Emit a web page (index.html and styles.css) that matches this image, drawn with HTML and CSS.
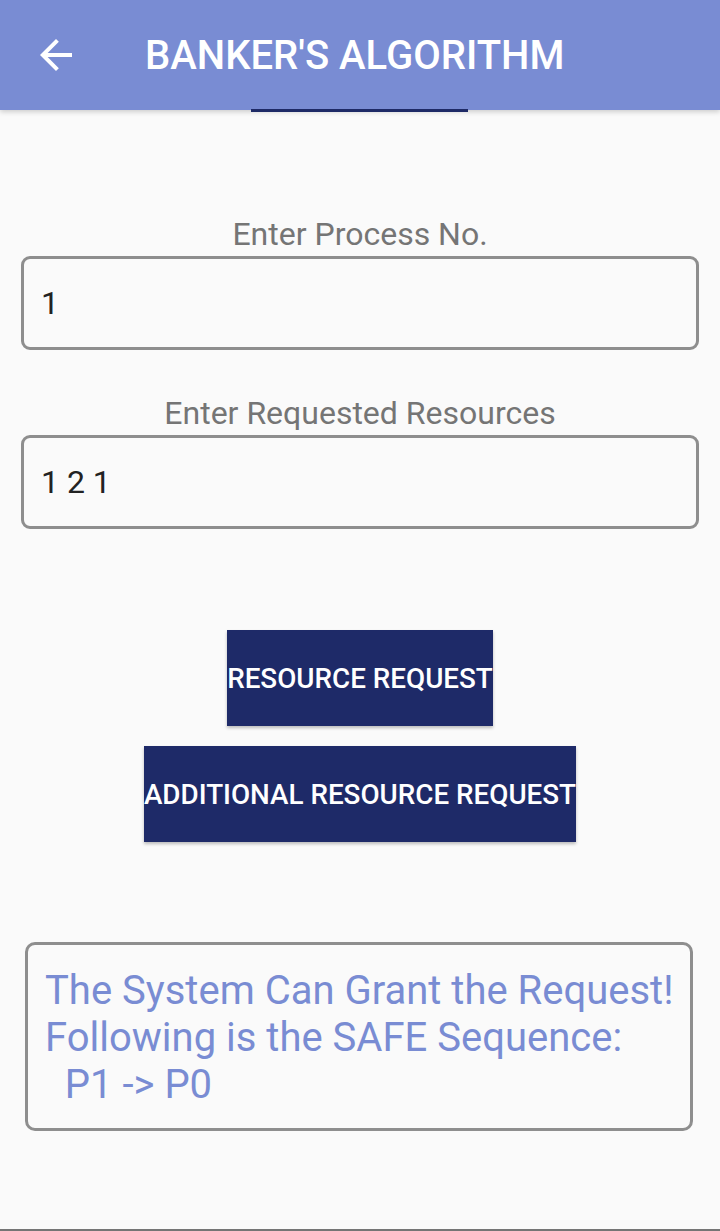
FILE: index.html
```html
<!DOCTYPE html>
<html>
<head>
<meta charset="utf-8">
<link rel="stylesheet" href="styles.css">
</head>
<body>
<div class="screen">
  <header class="appbar">
    <svg class="back" viewBox="0 0 24 24" width="48" height="48"><path d="M20 11H7.83l5.59-5.59L12 4l-8 8 8 8 1.41-1.41L7.83 13H20v-2z" fill="#fff"/></svg>
    <h1 class="title">BANKER'S ALGORITHM</h1>
    <div class="tab-indicator"></div>
  </header>
  <main class="content">
    <label class="field-label">Enter Process No.</label>
    <div class="field">1</div>
    <label class="field-label second">Enter Requested Resources</label>
    <div class="field">1 2 1</div>
    <div class="buttons">
      <button class="btn">RESOURCE REQUEST</button>
      <button class="btn">ADDITIONAL RESOURCE REQUEST</button>
    </div>
    <div class="result">The System Can Grant the Request!
Following is the SAFE Sequence:
  P1 -&gt; P0</div>
  </main>
  <div class="bottom-line"></div>
</div>
</body>
</html>
```
FILE: styles.css
```css
html, body {
  margin: 0;
  padding: 0;
  background: #fafafa;
  font-family: Roboto, "Liberation Sans", sans-serif;
}
.screen {
  width: 720px;
  height: 1231px;
  display: flex;
  flex-direction: column;
  position: relative;
  overflow: hidden;
}
.appbar {
  height: 110px;
  flex: none;
  background: #798cd3;
  display: flex;
  align-items: center;
  position: relative;
  box-shadow: 0 2px 5px rgba(0,0,0,0.18);
  z-index: 1;
}
.back {
  margin-left: 32px;
  width: 48px;
  height: 48px;
}
.title {
  margin: 0 0 0 65px;
  color: #fff;
  font-weight: 500;
  font-size: 40px;
  letter-spacing: 0;
}
.tab-indicator {
  position: absolute;
  left: 251px;
  width: 217px;
  bottom: -2px;
  height: 3px;
  background: #1e2a66;
}
.content {
  flex: 1;
  display: flex;
  flex-direction: column;
  align-items: stretch;
  padding: 105px 21px 0 21px;
}
.field-label {
  text-align: center;
  color: #757575;
  font-size: 32px;
  line-height: 38px;
  margin-bottom: 3px;
}
.field-label.second {
  margin-top: 44px;
}
.field {
  height: 88px;
  border: 3px solid #8e8e8e;
  border-radius: 9px;
  box-sizing: content-box;
  padding: 0 17px;
  display: flex;
  align-items: center;
  font-size: 32px;
  color: #222;
}
.buttons {
  margin-top: 101px;
  display: flex;
  flex-direction: column;
  align-items: center;
  gap: 20px;
}
.btn {
  border: none;
  background: #1e2a68;
  color: #fff;
  font-family: Roboto, "Liberation Sans", sans-serif;
  font-weight: 500;
  font-size: 27.8px;
  height: 96px;
  padding: 0;
  box-shadow: 0 2px 3px rgba(0,0,0,0.25);
}
.result {
  margin: 100px 6px 0 4px;
  border: 3px solid #8e8e8e;
  border-radius: 10px;
  padding: 22px 18px 20px 17px;
  white-space: pre;
  color: #798cd3;
  font-size: 40px;
  line-height: 47px;
}
.bottom-line {
  position: absolute;
  left: 0;
  right: 0;
  bottom: 0;
  height: 2px;
  background: #757575;
}
```
